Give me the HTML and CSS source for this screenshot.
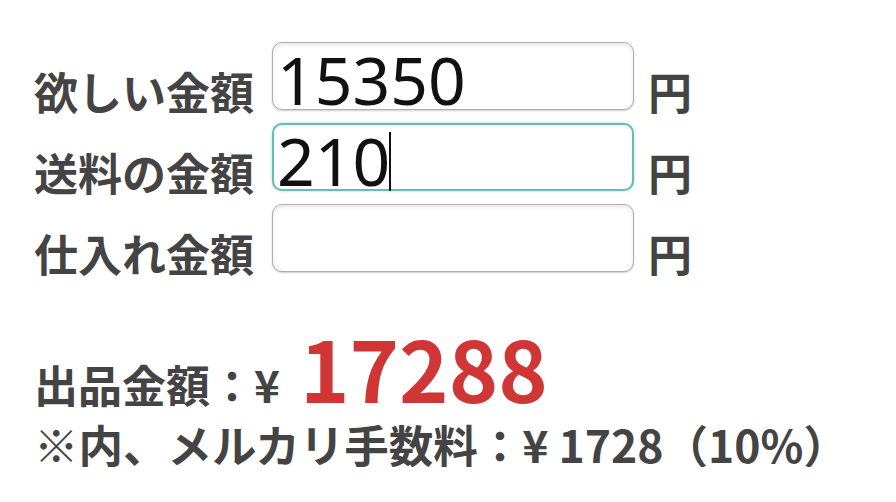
FILE: index.html
```html
<!DOCTYPE html>
<html lang="ja">
<head>
<meta charset="utf-8">
<title>出品金額計算</title>
<link rel="stylesheet" href="styles.css">
</head>
<body>
<main class="calc">
  <div class="row">
    <span class="label">欲しい金額</span>
    <div class="field"><span class="value">15350</span></div>
    <span class="unit">円</span>
  </div>
  <div class="row">
    <span class="label">送料の金額</span>
    <div class="field focused"><span class="value">210</span><span class="caret"></span></div>
    <span class="unit">円</span>
  </div>
  <div class="row">
    <span class="label">仕入れ金額</span>
    <div class="field"><span class="value"></span></div>
    <span class="unit">円</span>
  </div>
  <div class="result">
    <p class="total">出品金額：¥ <span class="amount">17288</span></p>
    <p class="fee">※内、メルカリ手数料：¥ 1728（10%）</p>
  </div>
</main>
</body>
</html>
```
FILE: styles.css
```css
html, body {
  margin: 0;
  background: #ffffff;
}
body {
  font-family: "Noto Sans CJK JP", "Noto Sans", sans-serif;
  color: #444444;
}
.calc {
  padding: 42px 0 0 34px;
}
.row {
  display: flex;
  align-items: flex-end;
  margin-bottom: 13px;
}
.label {
  font-size: 44px;
  font-weight: 700;
  line-height: 1;
  margin-bottom: -3px;
  margin-right: 18px;
  white-space: nowrap;
}
.field {
  box-sizing: border-box;
  width: 362px;
  height: 68px;
  padding: 3px 0 0 4px;
  border: 1px solid #aeaeae;
  border-radius: 10px;
  background: #ffffff;
  box-shadow: inset 0 2px 4px rgba(0, 0, 0, 0.10), 0 1px 2px rgba(0, 0, 0, 0.20);
  font-family: "Noto Sans", "Open Sans", sans-serif;
  font-size: 66px;
  line-height: 66px;
  color: #111111;
  white-space: nowrap;
}
.field.focused {
  border: 2px solid #66bdb5;
  padding: 2px 0 0 3px;
  box-shadow: 0 0 3px rgba(102, 189, 181, 0.6), inset 0 1px 3px rgba(0, 0, 0, 0.08);
}
.caret {
  display: inline-block;
  width: 2px;
  height: 59px;
  margin-left: -1px;
  vertical-align: -5px;
  background: #111111;
}
.unit {
  font-size: 44px;
  font-weight: 700;
  line-height: 1;
  margin-left: 14px;
  margin-bottom: -3px;
}
.result {
  margin-top: 53px;
}
.total {
  margin: 0;
  font-size: 44px;
  font-weight: 700;
  line-height: 1;
  white-space: nowrap;
}
.amount {
  display: inline-block;
  margin-left: 10px;
  font-size: 84px;
  line-height: 1;
  color: #d03636;
}
.fee {
  margin: 13px 0 0;
  font-size: 44.5px;
  font-weight: 700;
  line-height: 1;
  white-space: nowrap;
}
```
